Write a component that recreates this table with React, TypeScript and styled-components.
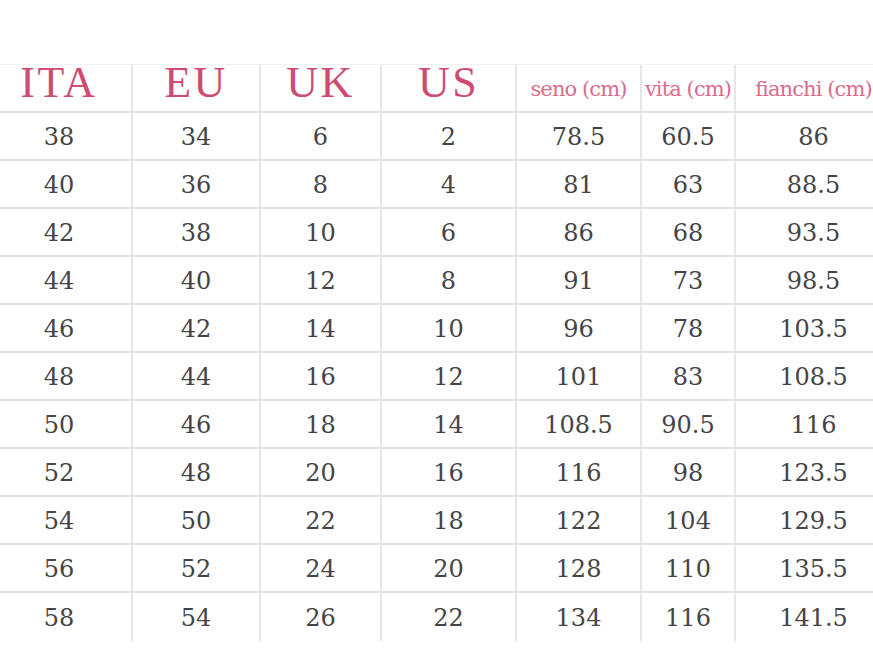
import React, { FC } from "react";
import styled, { createGlobalStyle } from "styled-components";

const GlobalStyle = createGlobalStyle`
  html, body {
    margin: 0;
    padding: 0;
    background: #ffffff;
    overflow: hidden;
  }
`;

const COLUMNS = [146, 128, 121, 135, 125, 94, 157];

const HEADERS: { label: string; small?: boolean }[] = [
  { label: "ITA" },
  { label: "EU" },
  { label: "UK" },
  { label: "US" },
  { label: "seno (cm)", small: true },
  { label: "vita (cm)", small: true },
  { label: "fianchi (cm)", small: true },
];

const ROWS: string[][] = [
  ["38", "34", "6", "2", "78.5", "60.5", "86"],
  ["40", "36", "8", "4", "81", "63", "88.5"],
  ["42", "38", "10", "6", "86", "68", "93.5"],
  ["44", "40", "12", "8", "91", "73", "98.5"],
  ["46", "42", "14", "10", "96", "78", "103.5"],
  ["48", "44", "16", "12", "101", "83", "108.5"],
  ["50", "46", "18", "14", "108.5", "90.5", "116"],
  ["52", "48", "20", "16", "116", "98", "123.5"],
  ["54", "50", "22", "18", "122", "104", "129.5"],
  ["56", "52", "24", "20", "128", "110", "135.5"],
  ["58", "54", "26", "22", "134", "116", "141.5"],
];

/**
 * Tabella taglie
 */
const App: FC = () => {
  return (
    <Page>
      <GlobalStyle />
      <SizeTable>
        {HEADERS.map((h) => (
          <HeadCell key={h.label} $small={h.small}>
            {h.label}
          </HeadCell>
        ))}
        {ROWS.map((row, r) =>
          row.map((v, c) => (
            <Cell key={`${r}-${c}`} $last={r === ROWS.length - 1}>
              {v}
            </Cell>
          ))
        )}
      </SizeTable>
    </Page>
  );
};

export default App;

const Page = styled.div`
  width: 873px;
  height: 655px;
  overflow: hidden;
  padding-top: 64px;
  box-sizing: border-box;
`;

const SizeTable = styled.div`
  display: grid;
  grid-template-columns: ${COLUMNS.map((w) => `${w}px`).join(" ")};
  grid-template-rows: 48px;
  grid-auto-rows: 48px;
  margin-left: -13px;
  width: max-content;
  border-top: 1px solid #f0f1f1;
`;

const HeadCell = styled.div<{ $small?: boolean }>`
  display: flex;
  align-items: flex-end;
  justify-content: center;
  box-sizing: border-box;
  border-right: 2px solid #e5e6e6;
  border-bottom: 2px solid #e1e2e2;
  white-space: nowrap;
  font-family: ${({ $small }) =>
    $small ? `"DejaVu Serif", serif` : `"Liberation Serif", serif`};
  font-size: ${({ $small }) => ($small ? "21px" : "44px")};
  letter-spacing: ${({ $small }) => ($small ? "-0.9px" : "2.5px")};
  color: ${({ $small }) => ($small ? "#d96c8d" : "#cf4b71")};
  padding-bottom: ${({ $small }) => ($small ? "11px" : "6px")};
  line-height: 1;
`;

const Cell = styled.div<{ $last?: boolean }>`
  display: flex;
  align-items: center;
  justify-content: center;
  box-sizing: border-box;
  border-right: 2px solid #e5e6e6;
  border-bottom: ${({ $last }) => ($last ? "none" : "2px solid #e1e2e2")};
  font-family: "DejaVu Serif", serif;
  font-size: 24px;
  color: #444446;
  padding-top: 2px;
`;
